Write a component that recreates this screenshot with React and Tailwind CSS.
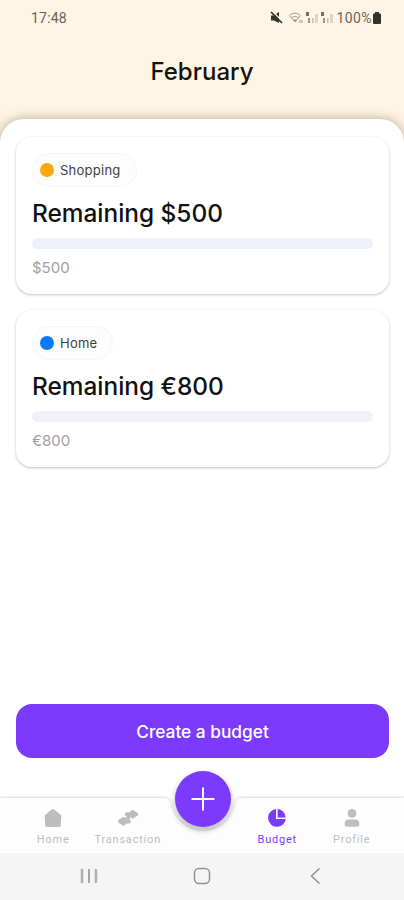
import React from "react";
import clsx from "clsx";

const budgets = [
  { id: 1, name: "Shopping", dot: "bg-[#ffa60d]", amount: "$500" },
  { id: 2, name: "Home", dot: "bg-[#0a78ff]", amount: "€800" },
];

const HomeIcon = () => (
  <svg width="20" height="20" viewBox="0 0 20 20" fill="currentColor">
    <path d="M8.800 1.400a1.900 1.900 0 0 1 2.400 0l6.400 5.300c.9.800 1 1.400.6 2.200l-.4 8.100c-.1 1.300-.8 1.900-2 1.900H4.200c-1.200 0-1.900-.6-2-1.900l-.4-8.100c-.4-.8-.3-1.400.6-2.200z" />
  </svg>
);

const TransactionIcon = () => (
  <svg width="22" height="20" viewBox="0 0 22 20" fill="currentColor">
    <path d="M9.800 4.200h3.400c.3-1.700 1.900-2.600 3.400-1.800l3.400 2.200c1.500 1 1.500 2.500 0 3.500l-3.400 2.200c-1.500.8-3.100-.1-3.400-1.800H9.800c-2.600-.3-2.600-4 0-4.300z" />
    <path d="M12 11.200H8.800c-.3-1.700-1.900-2.600-3.400-1.800L2 11.600c-1.500 1-1.500 2.500 0 3.500l3.400 2.200c1.500.8 3.100-.1 3.400-1.800H12c2.600-.3 2.600-4 0-4.300z" />
    <path d="M7.500 11l3-3.500h2.500v4H8z" />
  </svg>
);

const BudgetIcon = () => (
  <svg width="20" height="20" viewBox="0 0 20 20" fill="currentColor">
    <path d="M9 1.100v9.900h9.800A8.900 8.900 0 1 1 9 1.100z" />
    <path d="M10.600 1.100a8.900 8.900 0 0 1 8.200 8.300h-8.200z" />
  </svg>
);

const ProfileIcon = () => (
  <svg width="20" height="20" viewBox="0 0 20 20" fill="currentColor">
    <circle cx="10" cy="5.400" r="4.400" />
    <path d="M6.500 11.500h7c2.300 0 3.900 1.800 3.900 4.300 0 1.900-.9 3-2.500 3H5.100c-1.600 0-2.500-1.100-2.500-3 0-2.500 1.600-4.300 3.900-4.300z" />
  </svg>
);

const SignalIcon = () => (
  <svg width="15" height="14" viewBox="0 0 15 14">
    <path d="M1 1h3v4H1z" fill="#777064" />
    <path d="M3.200 7h1.600v5H3.200z" fill="#857d70" />
    <path d="M7 7h1.600v5H7z" fill="#c8c0b1" />
    <path d="M10 3h3v9h-3z" fill="#ded5c5" />
  </svg>
);

const StatusBar = () => (
  <div className="flex h-9 items-center justify-between pl-[31px] pr-[22px] font-[Roboto,sans-serif] text-[14px] text-[#6b6458]">
    <span className="tracking-[0.2px]">17:48</span>
    <div className="flex items-center">
      <svg className="mr-[4px]" width="14" height="14" viewBox="0 0 14 14">
        <path d="M1 4.500h3L9 1v11L4 9.500H1z" fill="#35312b" />
        <path d="M1 1l11 11" stroke="#fff5e4" strokeWidth="1.500" transform="translate(1 -1)" />
        <path d="M1 1l11 11" stroke="#35312b" strokeWidth="1.700" />
      </svg>
      <svg width="17" height="14" viewBox="0 0 17 14" fill="none" stroke="#a39b8d" strokeWidth="1">
        <path d="M1.500 4.500c3-3 8-3 11 0M3.500 7c2-2 5-2 7 0M1.500 4.500L7 11l5.500-6.500" />
        <path d="M5.500 9h3L7 11z" fill="#979083" />
        <path d="M12 9v3M14 9v3" strokeWidth="1" />
      </svg>
      <SignalIcon />
      <SignalIcon />
      <span className="ml-[2px] tracking-[0.4px]">100%</span>
      <svg width="10" height="14" viewBox="0 0 10 14" fill="#35312b">
        <path d="M3 1h4v1.500h1A1 1 0 0 1 9 3.500V12a1 1 0 0 1-1 1H2a1 1 0 0 1-1-1V3.500a1 1 0 0 1 1-1h1z" />
      </svg>
    </div>
  </div>
);

const BudgetCard = ({ budget }) => (
  <div className="h-[157px] rounded-[16px] bg-white px-4 pt-4 shadow-[0_1px_3px_rgba(0,0,0,0.25)]">
    <div className="inline-flex h-[34px] items-center gap-[7px] rounded-full border border-[#f6f6f7] bg-[#fdfdfd] pl-[7px] pr-[15px] align-top">
      <span className={clsx("h-[14px] w-[14px] rounded-full", budget.dot)} />
      <span className="-ml-px text-[13px] leading-none tracking-[0.25px] text-[#404040]">{budget.name}</span>
    </div>
    <h2 className="mt-[11px] text-[24.400px] font-medium leading-[30px] text-[#111]">
      Remaining {budget.amount}
    </h2>
    <div className="mt-[10px] h-[11px] rounded-full bg-[#f0f0fa]" />
    <p className="mt-[9px] text-[15px] leading-5 text-[#a0a0a3]">{budget.amount}</p>
  </div>
);

const NavItem = ({ icon: Icon, label, active }) => (
  <div
    className={clsx(
      "flex w-[74.500px] flex-col items-center gap-[5px]",
      active ? "text-[#7c3aff]" : "text-[#bdbdbd]"
    )}
  >
    <Icon />
    <span className="font-[Roboto,sans-serif] text-[11px] leading-[13px] tracking-[0.8px]">{label}</span>
  </div>
);

const BottomNav = () => (
  <div className="relative h-[56px]">
    <svg className="absolute left-0 top-[-10px]" width="404" height="66" viewBox="0 0 404 66">
      <path
        className="drop-shadow-[0_-1px_1px_rgba(0,0,0,0.15)]"
        d="M0 11H163C169 11 170 14 172 20A32 32 0 0 0 234 20C236 14 237 11 243 11H404V66H0z"
        fill="#fdfdfd"
      />
    </svg>
    <button className="absolute left-[175px] top-[-26px] flex h-[56px] w-[56px] items-center justify-center rounded-full bg-[#7c3aff] shadow-[0_3px_6px_rgba(0,0,0,0.3)]">
      <svg width="24" height="24" viewBox="0 0 24 24" stroke="#fff" strokeWidth="2">
        <path d="M0.500 12h23M12 0.500v23" />
      </svg>
    </button>
    <nav className="relative flex justify-between pl-[16px] pr-[15px] pt-[11px]">
      <div className="flex">
        <NavItem icon={HomeIcon} label="Home" />
        <NavItem icon={TransactionIcon} label="Transaction" />
      </div>
      <div className="flex">
        <NavItem icon={BudgetIcon} label="Budget" active />
        <NavItem icon={ProfileIcon} label="Profile" />
      </div>
    </nav>
  </div>
);

const SystemBar = () => (
  <div className="flex h-[47px] items-center justify-between bg-[#f5f5f5] pb-[2px] pl-[80px] pr-[80px]">
    <svg width="18" height="16" viewBox="0 0 18 16" strokeWidth="1.500">
      <path d="M2 1v14M16 1v14" stroke="#b0b0b0" strokeWidth="2.500" />
      <path d="M9 1v14" stroke="#888" />
    </svg>
    <svg width="18" height="18" viewBox="0 0 18 18" fill="none" stroke="#929292" strokeWidth="1.500">
      <rect x="1.500" y="1.500" width="15" height="15" rx="4.500" />
    </svg>
    <svg width="18" height="18" viewBox="0 0 18 18" fill="none" stroke="#929292" strokeWidth="1.500">
      <path d="M13.500 1.500L5.500 9l8 7.500" />
    </svg>
  </div>
);

const App = () => {
  return (
    <div className="flex h-[900px] w-[404px] flex-col overflow-hidden bg-[#fff5e4] font-[Inter,sans-serif]">
      <StatusBar />
      <h1 className="flex h-[83px] items-start justify-center pt-[21px] text-[24px] font-medium leading-[30px] text-[#15130f]">
        February
      </h1>
      <div className="flex flex-1 flex-col rounded-t-[24px] bg-white shadow-[0_0_12px_rgba(90,75,45,0.45)]">
        <main className="flex flex-1 flex-col gap-4 pl-4 pr-[15px] pt-[18px]">
          {budgets.map(budget => (
            <BudgetCard key={budget.id} budget={budget} />
          ))}
          <button className="mb-[39px] mt-auto h-[54px] rounded-[16px] bg-[#7c3aff] pt-[1px] text-[17.300px] font-medium text-white">
            Create a budget
          </button>
        </main>
        <BottomNav />
        <SystemBar />
      </div>
    </div>
  );
};

export default App;
